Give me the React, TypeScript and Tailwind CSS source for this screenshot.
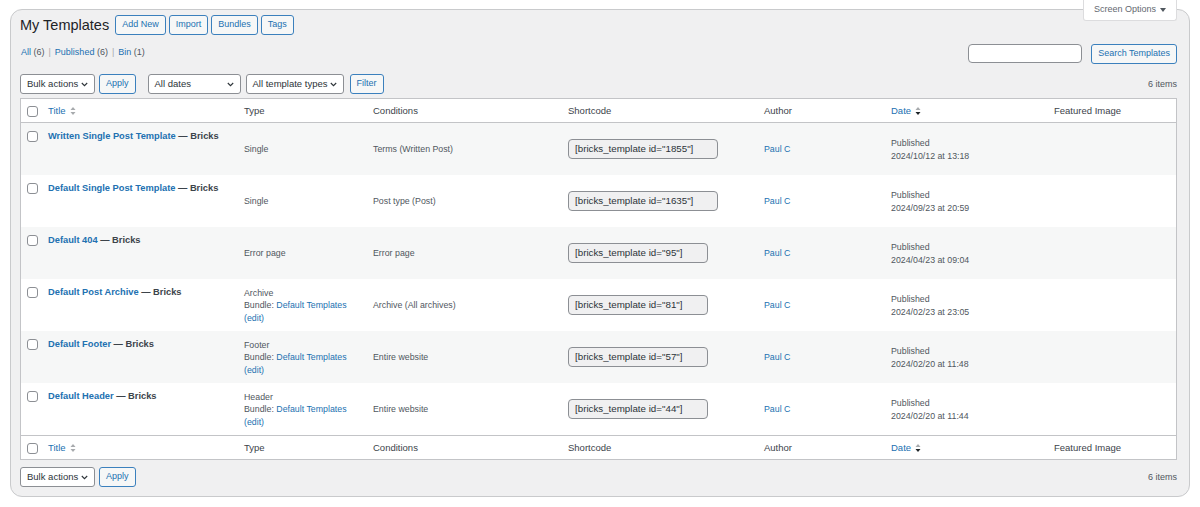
type Template = {
  title: string;
  type: string;
  bundle?: boolean;
  condition: string;
  id: string;
  date: string;
};

const templates: Template[] = [
  { title: 'Written Single Post Template', type: 'Single', condition: 'Terms (Written Post)', id: '1855', date: '2024/10/12 at 13:18' },
  { title: 'Default Single Post Template', type: 'Single', condition: 'Post type (Post)', id: '1635', date: '2024/09/23 at 20:59' },
  { title: 'Default 404', type: 'Error page', condition: 'Error page', id: '95', date: '2024/04/23 at 09:04' },
  { title: 'Default Post Archive', type: 'Archive', bundle: true, condition: 'Archive (All archives)', id: '81', date: '2024/02/23 at 23:05' },
  { title: 'Default Footer', type: 'Footer', bundle: true, condition: 'Entire website', id: '57', date: '2024/02/20 at 11:48' },
  { title: 'Default Header', type: 'Header', bundle: true, condition: 'Entire website', id: '44', date: '2024/02/20 at 11:44' },
];

const cols = 'grid grid-cols-[19px_196px_129px_195px_196px_127px_163px_1fr]';

function Checkbox() {
  return <span className="block h-[11px] w-[11px] rounded-[3px] border border-[#8c8f94] bg-white" />;
}

function SortArrows({ active }: { active?: boolean }) {
  return (
    <svg width="6" height="10" viewBox="0 0 6 10" className="ml-[4px]">
      <polygon points="0.5,4 3,1 5.5,4" fill="#a7aaad" />
      <polygon points="0.5,6 3,9 5.5,6" fill={active ? '#1d2327' : '#a7aaad'} />
    </svg>
  );
}

function Chevron() {
  return (
    <svg width="7" height="5" viewBox="0 0 7 5">
      <path d="M0.8 1l2.7 2.7L6.2 1" fill="none" stroke="#2c3338" strokeWidth="1.1" />
    </svg>
  );
}

function Button({ children, className = '' }: { children: React.ReactNode; className?: string }) {
  return (
    <span
      className={`inline-flex h-[20px] items-center rounded-[3px] border border-[#3b80bd] bg-[#f6f7f7] px-[6px] text-[9px] text-[#2271b1] ${className}`}
    >
      {children}
    </span>
  );
}

function Select({ label, width }: { label: string; width: string }) {
  return (
    <span
      className={`flex h-[20px] items-center justify-between rounded-[3px] border border-[#8c8f94] bg-white pl-[6px] pr-[6px] text-[9.5px] text-[#2c3338] ${width}`}
    >
      {label}
      <Chevron />
    </span>
  );
}

function HeadRow({ top }: { top?: boolean }) {
  return (
    <div
      className={`${cols} h-[24px] items-center bg-white pt-[1px] text-[9.5px] text-[#3c434a] ${
        top ? 'border-b' : 'border-t'
      } border-[#c3c4c7]`}
    >
      <div className="pl-[6px]">
        <Checkbox />
      </div>
      <div className="flex items-center pl-[8px] text-[#2271b1]">
        Title
        <SortArrows />
      </div>
      <div className="pl-[8px]">Type</div>
      <div className="pl-[8px]">Conditions</div>
      <div className="pl-[8px]">Shortcode</div>
      <div className="pl-[8px]">Author</div>
      <div className="flex items-center pl-[8px] text-[#2271b1]">
        Date
        <SortArrows active />
      </div>
      <div className="pl-[8px]">Featured Image</div>
    </div>
  );
}

function TemplateRow({ t, striped }: { t: Template; striped: boolean }) {
  return (
    <div className={`${cols} h-[52px] text-[8.8px] text-[#50575e] ${striped ? 'bg-[#f6f7f7]' : 'bg-white'}`}>
      <div className="self-start pl-[6px] pt-[8px]">
        <Checkbox />
      </div>
      <div className="self-start pl-[8px] pt-[7px] text-[9.3px] font-bold leading-[13px] text-[#3c434a]">
        <span className="text-[#2271b1]">{t.title}</span> — Bricks
      </div>
      <div className="self-center pl-[8px] pt-[1px] leading-[12.5px]">
        <div>{t.type}</div>
        {t.bundle && (
          <>
            <div>
              Bundle: <span className="text-[#2271b1]">Default Templates</span>
            </div>
            <div className="text-[#2271b1]">(edit)</div>
          </>
        )}
      </div>
      <div className="self-center pl-[8px] pt-[1px]">{t.condition}</div>
      <div className="self-center pl-[8px]">
        <div
          className={`flex h-[20px] items-center rounded-[4px] border border-[#8c8f94] bg-[#f0f0f1] pl-[6px] text-[9.75px] text-[#2c3338] ${
            t.id.length > 2 ? 'w-[150px]' : 'w-[140px]'
          }`}
        >
          [bricks_template id="{t.id}"]
        </div>
      </div>
      <div className="self-center pl-[8px] pt-[1px] text-[#2271b1]">Paul C</div>
      <div className="self-center pl-[8px] pt-[1px] leading-[13px]">
        <div>Published</div>
        <div>{t.date}</div>
      </div>
      <div />
    </div>
  );
}

export default function App() {
  return (
    <div className="h-[507px] bg-white px-[10px] pt-[9px] font-['Liberation_Sans',Arial,sans-serif]">
      <div className="relative h-[488px] rounded-[12px] border border-[#c9cacc] bg-[#f0f0f1] pl-[9px] pr-[12px] pt-[4px]">
        {/* Screen Options tab */}
        <div className="absolute right-[12px] top-[-10px] flex h-[21px] w-[94px] items-center justify-center gap-[4px] rounded-b-[3px] border-x border-b border-[#dcdcde] bg-white text-[9px] text-[#646970]">
          Screen Options
          <svg width="6" height="4" viewBox="0 0 6 4">
            <polygon points="0,0 6,0 3,4" fill="#50575e" />
          </svg>
        </div>

        <div className="flex h-[21px] items-center">
          <h1 className="mr-[6px] pt-[3px] text-[14.5px] font-normal text-[#1d2327]">My Templates</h1>
          <div className="flex gap-[3px]">
            <Button>Add New</Button>
            <Button>Import</Button>
            <Button>Bundles</Button>
            <Button>Tags</Button>
          </div>
        </div>

        <div className="mt-[9px] flex h-[20px] items-start justify-between">
          <div className="pl-[1px] pt-[1px] text-[9px] leading-[14px] text-[#50575e]">
            <span className="text-[#2271b1]">All</span> (6)
            <span className="mx-[4px] text-[#a7aaad]">|</span>
            <span className="text-[#2271b1]">Published</span> (6)
            <span className="mx-[4px] text-[#a7aaad]">|</span>
            <span className="text-[#2271b1]">Bin</span> (1)
          </div>
          <div className="flex items-start gap-[9px]">
            <span className="block h-[19px] w-[114px] rounded-[4px] border border-[#8c8f94] bg-white" />
            <Button>Search Templates</Button>
          </div>
        </div>

        <div className="mt-[10px] flex h-[20px] items-center">
          <Select label="Bulk actions" width="w-[75px]" />
          <Button className="ml-[4px]">Apply</Button>
          <Select label="All dates" width="ml-[12px] w-[93px]" />
          <Select label="All template types" width="ml-[5px] w-[98px]" />
          <Button className="ml-[6px]">Filter</Button>
          <span className="ml-auto pt-[2px] text-[9px] text-[#50575e]">6 items</span>
        </div>

        <div className="mt-[4px] border border-[#c3c4c7] bg-white">
          <HeadRow top />
          {templates.map((t, i) => (
            <TemplateRow key={t.id} t={t} striped={i % 2 === 0} />
          ))}
          <HeadRow />
        </div>

        <div className="mt-[7px] flex h-[20px] items-center">
          <Select label="Bulk actions" width="w-[75px]" />
          <Button className="ml-[4px]">Apply</Button>
          <span className="ml-auto pt-[1px] text-[9px] text-[#50575e]">6 items</span>
        </div>
      </div>
    </div>
  );
}
